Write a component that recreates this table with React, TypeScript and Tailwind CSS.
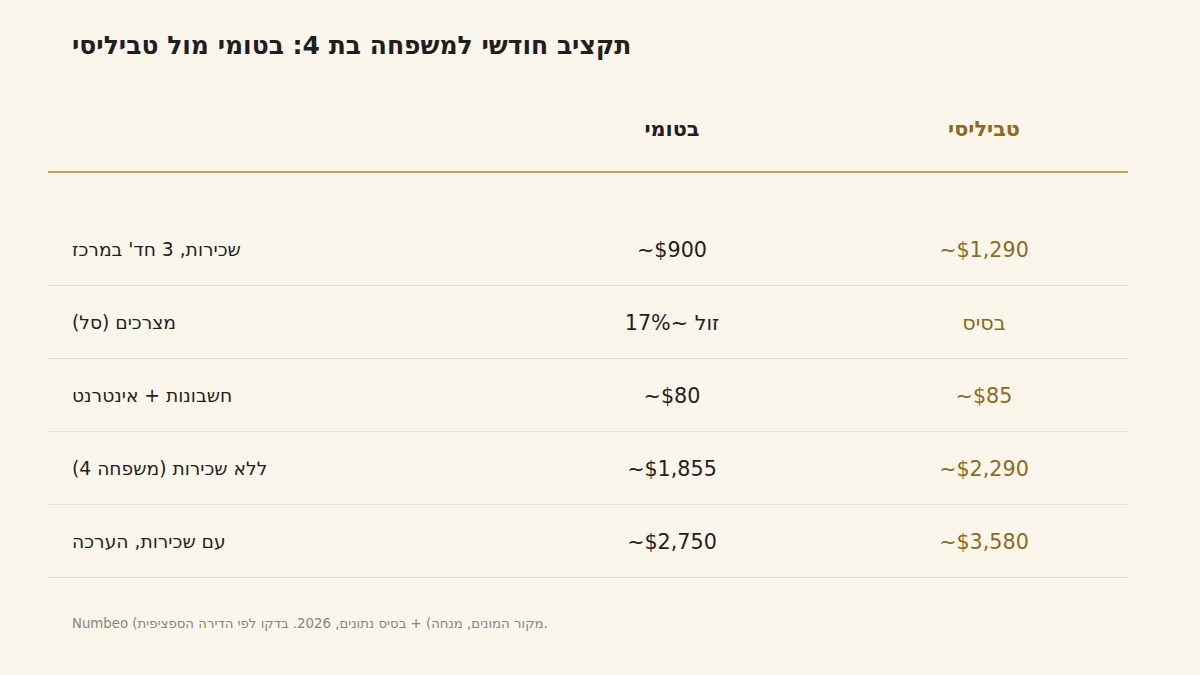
const rows = [
  { label: "שכירות, 3 חד' במרכז", batumi: '~$900', tbilisi: '~$1,290' },
  { label: 'מצרכים (סל)', batumi: 'זול ~17%', tbilisi: 'בסיס' },
  { label: 'חשבונות + אינטרנט', batumi: '~$80', tbilisi: '~$85' },
  { label: 'ללא שכירות (משפחה 4)', batumi: '~$1,855', tbilisi: '~$2,290' },
  { label: 'עם שכירות, הערכה', batumi: '~$2,750', tbilisi: '~$3,580' },
];

export default function App() {
  return (
    <div
      className="w-[1200px] h-[675px] bg-[#faf6ec] pl-12 pr-[72px] pt-[30px] text-[#1f1f1f]"
      style={{ fontFamily: '"DejaVu Sans", sans-serif' }}
    >
      <h1 className="pl-6 text-[25px] leading-8 font-bold">
        תקציב חודשי למשפחה בת 4: בטומי מול טביליסי
      </h1>

      {/* header row */}
      <div className="mt-[25px] h-[86px] pt-[2px] grid grid-cols-[468px_312px_1fr] items-center border-b-2 border-[#c4a24e] text-[20.8px] font-bold">
        <div />
        <div className="text-center">בטומי</div>
        <div className="text-center pl-3 text-[#8b6c23]">טביליסי</div>
      </div>

      <div className="mt-10">
        {rows.map((r) => (
          <div
            key={r.label}
            className="h-[73px] pt-[3px] grid grid-cols-[468px_312px_1fr] items-center border-b border-[#e6e1d6]"
          >
            <div className="pl-6 text-[18.7px]">{r.label}</div>
            <div className="text-center text-[20.7px]">{r.batumi}</div>
            <div className="text-center pl-3 text-[20.7px] text-[#8b6c23]">{r.tbilisi}</div>
          </div>
        ))}
      </div>

      <p className="mt-9 pl-6 text-[13.3px] leading-5 text-[#8a8578]">
        <span className="[unicode-bidi:isolate]">Numbeo (</span>
        מקור המונים, מנחה) + בסיס נתונים, 2026. בדקו לפי הדירה הספציפית.
      </p>
    </div>
  );
}
